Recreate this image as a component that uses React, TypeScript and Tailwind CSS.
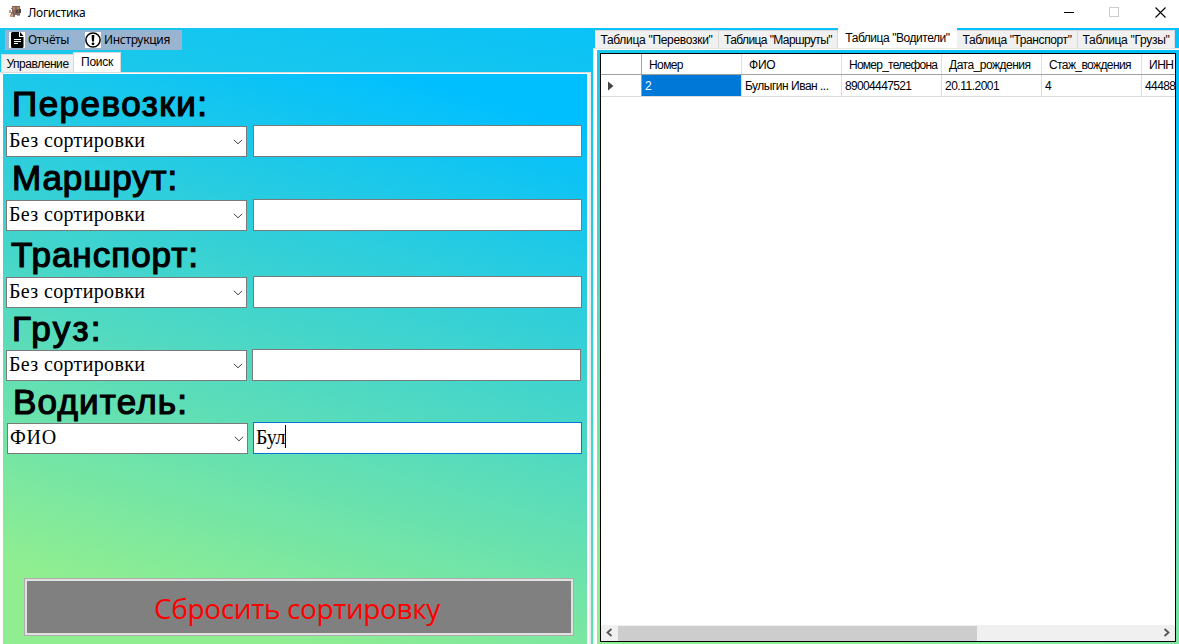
import React from "react";

const label = "font-['Liberation_Sans'] text-black whitespace-nowrap [-webkit-text-stroke:1.2px_black]";
const small = "font-['Liberation_Sans'] text-[12px] leading-[14px] whitespace-nowrap text-black";

function Chevron() {
  return (
    <svg width="10" height="6" viewBox="0 0 10 6" className="mr-[3px] shrink-0" fill="none" stroke="#444" strokeWidth="1">
      <path d="M0.8 0.8L5 4.8L9.2 0.8" />
    </svg>
  );
}

function Row({ top, title, value, track, valueTrack = "tracking-[0.35px]", indent, ml = "ml-[6px]", gap = "gap-[6px]", leading = "leading-[36px]", focus = false }: {
  top: string; title: string; value: string; track: string; valueTrack?: string; indent: string; ml?: string; gap?: string; leading?: string; focus?: boolean;
}) {
  return (
    <div className={`flex flex-col ${top}`}>
      <div className={`${label} h-[39px] text-[35px] ${leading} ${track} ${indent}`}>{title}</div>
      <div className={`flex items-end ${ml} ${gap}`}>
        <div className="flex h-[31px] w-[241px] shrink-0 items-center justify-between border border-[#7a7a7a] bg-white pl-[2px]">
          <span className={`-mt-[3px] font-['Liberation_Serif'] text-[20px] leading-[24px] whitespace-nowrap text-black ${valueTrack}`}>{value}</span>
          <Chevron />
        </div>
        <div className={`flex h-[32px] w-[329px] shrink-0 items-center border bg-white pl-[2px] ${focus ? "border-[#0078d7]" : "border-[#7a7a7a]"}`}>
          {focus && (
            <>
              <span className="-mt-[3px] font-['Liberation_Serif'] text-[20px] leading-[24px] tracking-[-0.3px]">Бул</span>
              <span className="-mt-[3px] h-[23px] w-px bg-black" />
            </>
          )}
        </div>
      </div>
    </div>
  );
}

function Tab({ w, text, track, active = false }: { w: string; text: string; track: string; active?: boolean }) {
  return (
    <div className={`flex shrink-0 justify-center ${w} ${active ? "h-[20px] bg-white pt-[3px]" : "h-[18px] border-t border-r border-[#d9d9d9] bg-[#f0f0f0] pt-[2px]"}`}>
      <span className={`${small} ${track}`}>{text}</span>
    </div>
  );
}

const columns = [
  { head: "Номер", cell: "2", ht: "tracking-[-0.6px]", ct: "" },
  { head: "ФИО", cell: "Булыгин Иван ...", ht: "tracking-[-0.2px]", ct: "tracking-[-0.5px]" },
  { head: "Номер_телефона", cell: "89004447521", ht: "tracking-[-0.75px]", ct: "tracking-[-0.65px]" },
  { head: "Дата_рождения", cell: "20.11.2001", ht: "tracking-[-0.5px]", ct: "tracking-[-0.5px]" },
  { head: "Стаж_вождения", cell: "4", ht: "tracking-[-0.6px]", ct: "" },
  { head: "ИНН", cell: "44488", ht: "tracking-[-0.5px]", ct: "tracking-[-0.6px]" },
];

export default function App() {
  return (
    <div className="flex h-[644px] w-[1179px] flex-col overflow-hidden bg-white">
      <header className="flex h-[28px] shrink-0 items-center justify-between bg-white">
        <div className="flex items-center">
          <svg width="13" height="13" viewBox="0 0 13 13" className="-mt-[4px] ml-[9px]">
            <path d="M3 0h8v9H3z" fill="#86665a" />
            <path d="M4 1h2v3H4zM8 1h2v2H8z" fill="#b58a66" />
            <path d="M7 4h2v3H7zM10 3h2v4h-2z" fill="#4b434d" />
            <path d="M0 4h2v3H0zM1 8h3v3H1z" fill="#d09a80" />
            <path d="M2 2h2v1H2zM4 9h2v2H4zM2 6h2v2H2z" fill="#777" />
            <path d="M8 9h3v1H8z" fill="#a7a7b2" />
          </svg>
          <span className="-mt-[3px] ml-[6px] font-['Noto_Sans'] text-[12px] leading-[16px] tracking-[-0.3px]">Логистика</span>
        </div>
        <svg width="110" height="14" viewBox="0 0 110 14" className="-mt-[4px] mr-[9px]" fill="none" stroke="#000">
          <path d="M4 7.500H14" />
          <rect x="49.500" y="2.500" width="9" height="9" stroke="#ccc" />
          <path d="M95.500 2.500L105.500 12.500M105.500 2.500L95.500 12.500" strokeWidth="1.100" />
        </svg>
      </header>

      <div className="flex min-h-0 flex-1 bg-[linear-gradient(10deg,#90ee90_-30%,#00bfff_96%)]">
        <section className="flex w-[591px] shrink-0 flex-col">
          <nav className="mt-[2px] ml-[5px] flex h-[20px] w-[177px] shrink-0 items-center bg-[#99b4d1] pl-[4px]">
            <svg width="16" height="16" viewBox="0 0 16 16" className="shrink-0">
              <path d="M0 0h16v16H0z" fill="#fff" />
              <path d="M3.500 0H10v5h4.500v9.500a1.500 1.500 0 0 1-1.500 1.500h-9.500A1.500 1.500 0 0 1 2 14.500v-13A1.500 1.500 0 0 1 3.500 0zM11 0l3.500 4H11z" fill="#000" />
              <path d="M5 7.500h7M5 9.500h7M5 11.500h4" stroke="#fff" />
            </svg>
            <span className="ml-[3px] w-[57px] font-['Noto_Sans'] text-[12px] leading-[16px] tracking-[-0.3px]">Отчёты</span>
            <svg width="16" height="16" viewBox="0 0 16 16" className="shrink-0">
              <path d="M0 0h16v16H0z" fill="#fff" />
              <circle cx="8" cy="8" r="7.100" fill="none" stroke="#000" strokeWidth="1.500" />
              <path d="M6.600 3h2.800L9 9.500H7z" fill="#000" />
              <circle cx="8" cy="11.800" r="1.400" fill="#000" />
            </svg>
            <span className="ml-[3px] font-['Noto_Sans'] text-[12px] leading-[16px] tracking-[-0.3px] whitespace-nowrap">Инструкция</span>
          </nav>
          <div className="flex h-[22px] shrink-0 items-end pl-px">
            <div className="flex h-[18px] w-[72px] justify-center border-t border-l border-[#d9d9d9] bg-[#f0f0f0] pt-[2px]">
              <span className={`${small} tracking-[-0.45px]`}>Управление</span>
            </div>
            <div className="flex h-[20px] w-[48px] justify-center border border-b-0 border-[#d9d9d9] bg-white pt-[2px]">
              <span className={`${small} tracking-[-0.3px]`}>Поиск</span>
            </div>
          </div>
          <div className="flex min-h-0 flex-1 border-t border-r-2 border-[#dcdcdc] border-r-[#ececec]">
            <div className="flex min-h-0 flex-1 border-t border-r-2 border-l-[3px] border-white">
              <div className="flex w-[584px] flex-col bg-[linear-gradient(16deg,#90ee90_11%,#00bfff_93%)]">
                <div className="-ml-[3px] flex flex-col">
                  <Row top="mt-[12px]" title="Перевозки:" value="Без сортировки" track="tracking-[1.5px]" indent="pl-[12px]" />
                  <Row top="mt-[3px]" title="Маршрут:" value="Без сортировки" track="tracking-[0.9px]" indent="pl-[12px]" />
                  <Row top="mt-[6px]" title="Транспорт:" value="Без сортировки" track="tracking-[1px]" indent="pl-[11px]" />
                  <Row top="mt-[2px]" title="Груз:" value="Без сортировки" track="tracking-[2.3px]" indent="pl-[12px]" gap="gap-[5px]" leading="leading-[38px]" />
                  <Row top="mt-[2px]" title="Водитель:" value="ФИО" track="tracking-[1.2px]" valueTrack="tracking-[0.7px]" indent="pl-[13px]" ml="ml-[7px]" gap="gap-[5px]" leading="leading-[38px]" focus />
                </div>
                <button className="mt-auto mb-[8px] ml-[21px] flex h-[58px] w-[550px] shrink-0 items-center justify-center border border-[#adadad] bg-[#e1e1e1] p-[2px]">
                  <span className="flex h-full w-full items-center justify-center bg-[#808080] pt-[2px] pr-[4px] font-['Open_Sans'] text-[28px] leading-[36px] tracking-[-0.4px] text-[#ff0000]">Сбросить сортировку</span>
                </button>
              </div>
            </div>
          </div>
        </section>

        <section className="ml-[2px] flex w-[586px] shrink-0 flex-col">
          <div className="flex h-[20px] shrink-0 items-end pl-[2px]">
            <Tab w="w-[124px]" text={'Таблица "Перевозки"'} track="tracking-[-0.3px]" />
            <Tab w="w-[119px]" text={'Таблица "Маршруты"'} track="tracking-[-0.6px]" />
            <Tab w="w-[119px]" text={'Таблица "Водители"'} track="tracking-[-0.45px]" active />
            <Tab w="w-[121px]" text={'Таблица "Транспорт"'} track="tracking-[-0.4px]" />
            <Tab w="w-[97px]" text={'Таблица "Грузы"'} track="tracking-[-0.3px]" />
          </div>
          <div className="flex min-h-0 flex-1 border-t border-l border-[#e5e5e5]">
            <div className="flex min-h-0 flex-1 border-t border-l-[3px] border-white bg-[linear-gradient(16deg,#90ee90_11%,#00bfff_93%)] pt-[3px] pl-[3px]">
              <div className="flex h-[589px] w-[576px] shrink-0 flex-col overflow-hidden border border-black bg-white">
                <div className="flex h-[21px] shrink-0 border-b border-[#a0a0a0]">
                  <div className="w-[41px] shrink-0 border-r border-[#a0a0a0]" />
                  {columns.map((c) => (
                    <div key={c.head} className="flex w-[100px] shrink-0 items-center border-r border-[#e0e0e0] pt-[2px] pl-[7px]">
                      <span className={`${small} ${c.ht}`}>{c.head}</span>
                    </div>
                  ))}
                </div>
                <div className="flex h-[22px] shrink-0 border-b border-[#dcdcdc]">
                  <div className="flex w-[41px] shrink-0 items-center border-r border-[#a0a0a0] pl-[7px]">
                    <svg width="6" height="10" viewBox="0 0 6 10"><path d="M0 0.500L5.500 5L0 9.500z" fill="#444" /></svg>
                  </div>
                  {columns.map((c, i) => (
                    <div key={c.head} className={`flex w-[100px] shrink-0 items-center border-r border-[#dcdcdc] pl-[3px] ${i === 0 ? "bg-[#0078d7]" : ""}`}>
                      <span className={`font-['Liberation_Sans'] text-[12px] leading-[14px] whitespace-nowrap ${c.ct} ${i === 0 ? "text-white" : "text-black"}`}>{c.cell}</span>
                    </div>
                  ))}
                </div>
                <div className="mt-auto flex h-[16px] shrink-0 items-center justify-between bg-[#f0f0f0]">
                  <svg width="17" height="16" viewBox="0 0 17 16" fill="none" stroke="#555" strokeWidth="1.800"><path d="M10.500 4L6.500 7.500L10.500 11" /></svg>
                  <div className="mr-auto h-[15px] w-[359px] bg-[#cdcdcd]" />
                  <svg width="17" height="16" viewBox="0 0 17 16" fill="none" stroke="#555" strokeWidth="1.800"><path d="M6.500 4L10.500 7.500L6.500 11" /></svg>
                </div>
              </div>
            </div>
          </div>
        </section>
      </div>
    </div>
  );
}
